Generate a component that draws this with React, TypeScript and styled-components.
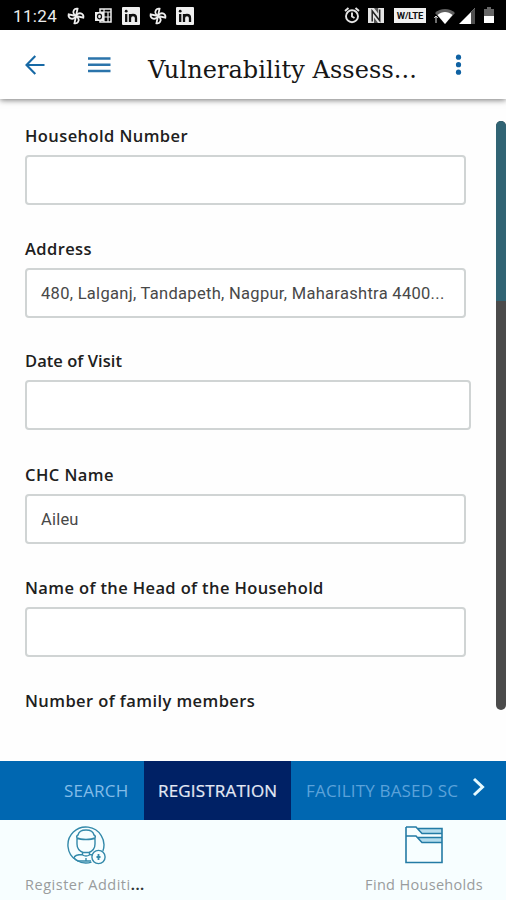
import React from "react";
import styled, { createGlobalStyle } from "styled-components";

const GlobalStyle = createGlobalStyle`
  * { box-sizing: border-box; }
  body { margin: 0; background: #fff; }
`;

const Screen = styled.div`
  width: 506px;
  height: 900px;
  display: flex;
  flex-direction: column;
  overflow: hidden;
  background: #fefefe;
  font-family: "Open Sans", "Noto Sans", sans-serif;
`;

const StatusBar = styled.div`
  flex: 0 0 30px;
  display: flex;
  align-items: center;
  padding: 1px 12px 0 13px;
  background: #000;
  color: #ececec;
`;

const Clock = styled.span`
  width: 54px;
  font: 400 17px/24px Roboto, sans-serif;
  letter-spacing: 0.35px;
  white-space: nowrap;
`;

const StatusIcon = styled.svg<{ $gap?: number }>`
  flex: none;
  display: block;
  margin-right: ${(p) => p.$gap ?? 0}px;
`;

const Grow = styled.div`
  flex: 1;
`;

const LteBadge = styled.span`
  width: 32px;
  height: 15px;
  margin-right: 8px;
  background: #f0f0f0;
  color: #111;
  font: 700 9.5px/15px Roboto, sans-serif;
  letter-spacing: -0.1px;
  text-align: center;
`;

const Header = styled.header`
  position: relative;
  flex: 0 0 69px;
  display: flex;
  align-items: center;
  padding: 0 40px 0 24px;
  background: #fff;
  box-shadow: 0 1px 6px rgba(0, 0, 0, 0.55);
`;

const Title = styled.h1`
  flex: 1;
  margin: 10px 0 0 36px;
  font: 400 24px/32px "DejaVu Serif", serif;
  letter-spacing: 0.07px;
  color: #161616;
  white-space: nowrap;
`;

const Body = styled.main`
  flex: 1 1 0;
  min-height: 0;
  display: flex;
  justify-content: space-between;
`;

const Form = styled.form`
  width: 471px;
  padding: 25px 0 0 25px;
  overflow: hidden;
`;

const Field = styled.div<{ $height: number }>`
  height: ${(p) => p.$height}px;
`;

const Label = styled.label<{ $spacing: number }>`
  display: block;
  height: 24px;
  margin-bottom: 7px;
  font-size: 16.5px;
  font-weight: 600;
  line-height: 24px;
  letter-spacing: ${(p) => p.$spacing}px;
  color: #202020;
  white-space: nowrap;
`;

const Value = styled.div<{ $wide?: boolean; $spacing?: number }>`
  width: ${(p) => (p.$wide ? 446 : 441)}px;
  height: 50px;
  padding: 0 14px;
  border: 2px solid #d0d4d4;
  border-radius: 4px;
  background: #fff;
  font: 400 16.5px/48px Roboto, sans-serif;
  letter-spacing: ${(p) => p.$spacing ?? 0}px;
  color: #484848;
  white-space: nowrap;
`;

const ScrollTrack = styled.div`
  width: 10px;
  height: 589px;
  margin-top: 22px;
  border-radius: 5px;
  background: #4b4b4b;
  overflow: hidden;
`;

const ScrollThumb = styled.div`
  height: 180px;
  background: #316474;
`;

const Tabs = styled.nav`
  flex: 0 0 59px;
  display: flex;
  background: #0067b1;
`;

const Tab = styled.div<{ $width: number; $indent: number; $active?: boolean; $color: string; $spacing: number }>`
  width: ${(p) => p.$width}px;
  padding-left: ${(p) => p.$indent}px;
  background: ${(p) => (p.$active ? "#002165" : "transparent")};
  color: ${(p) => p.$color};
  font-size: 17px;
  line-height: 59px;
  letter-spacing: ${(p) => p.$spacing}px;
  white-space: nowrap;
  -webkit-text-stroke: ${(p) => (p.$active ? 0.2 : 0)}px currentColor;
`;

const NextIcon = styled.svg`
  margin-top: 16px;
`;

const Footer = styled.footer`
  flex: 0 0 80px;
  display: flex;
  justify-content: space-between;
  padding: 5px 23px 0 25px;
  background: #f7feff;
`;

const Action = styled.div`
  display: flex;
  flex-direction: column;
  align-items: center;
`;

const ActionIcon = styled.svg<{ $shift?: number }>`
  display: block;
  margin-left: ${(p) => p.$shift ?? 0}px;
`;

const ActionLabel = styled.span<{ $spacing: number }>`
  margin-top: 9px;
  font-size: 14.5px;
  font-weight: 500;
  line-height: 22px;
  letter-spacing: ${(p) => p.$spacing}px;
  color: #999c9d;
  white-space: nowrap;
`;

const Dots = styled.b`
  color: #303638;
`;

const Pinwheel = ({ gap }: { gap: number }) => (
  <StatusIcon $gap={gap} width="18" height="18" viewBox="0 0 18 18" fill="none" stroke="#eee" strokeWidth="1.8">
    {[0, 90, 180, 270].map((a) => (
      <path key={a} d="M9 9V1.5C5.5 1.5 4.5 5.5 6.5 7.5Q7.5 8.5 9 9" transform={`rotate(${a + 12} 9 9)`} />
    ))}
  </StatusIcon>
);

const LinkedIn = ({ gap }: { gap: number }) => (
  <StatusIcon $gap={gap} width="18" height="18" viewBox="0 0 18 18">
    <rect width="18" height="18" rx="1" fill="#f0f0f0" />
    <circle cx="4.2" cy="4.2" r="1.4" fill="#111" />
    <path d="M4.2 7v8M8 15V7M8 11c0-4 6-4 6 0v4" fill="none" stroke="#111" strokeWidth="2.3" />
  </StatusIcon>
);

const fields = [
  { label: "Household Number", value: "", spacing: 0.42, height: 113 },
  {
    label: "Address",
    value: "480, Lalganj, Tandapeth, Nagpur, Maharashtra 4400...",
    spacing: 0.4,
    height: 112,
    valueSpacing: 0.3,
  },
  { label: "Date of Visit", value: "", spacing: 0.05, height: 114, wide: true },
  { label: "CHC Name", value: "Aileu", spacing: 0.45, height: 113, valueSpacing: 0.2 },
  { label: "Name of the Head of the Household", value: "", spacing: 0.38, height: 113 },
];

export default function App() {
  return (
    <Screen>
      <GlobalStyle />
      <StatusBar>
        <Clock>11:24</Clock>
        <Pinwheel gap={10} />
        <StatusIcon $gap={10} width="17" height="16" viewBox="0 0 17 16">
          <path d="M5 1h11v13H5z" fill="none" stroke="#eee" strokeWidth="1.5" />
          <path d="M5 4h11M9 1v13M13 4v10M9 9h7" stroke="#eee" strokeWidth="1.2" />
          <rect y="4" width="9" height="9" fill="#eee" />
          <ellipse cx="4.5" cy="8.5" rx="2" ry="2.4" fill="none" stroke="#111" strokeWidth="1.3" />
        </StatusIcon>
        <LinkedIn gap={9} />
        <Pinwheel gap={9} />
        <LinkedIn gap={0} />
        <Grow />
        <StatusIcon $gap={8} width="16" height="17" viewBox="0 0 16 17" fill="none" stroke="#e4e4e4" strokeWidth="1.9">
          <circle cx="8" cy="9.2" r="6" />
          <path d="M1 4l3.5-3M15 4l-3.5-3M8 5.5v4l2.5 1.5" />
        </StatusIcon>
        <StatusIcon $gap={10} width="16" height="17" viewBox="0 0 16 17">
          <path d="M0 1h16v15H0z" fill="#e4e4e4" />
          <path d="M4.2 14.5V4l7.5 9.5V2.5" fill="none" stroke="#222" strokeWidth="1.5" />
          <path d="M6 1l4.2 5.5V1M6 16v-5.5l4 5.5" fill="#555" />
        </StatusIcon>
        <LteBadge>W/LTE</LteBadge>
        <StatusIcon $gap={4} width="21" height="16" viewBox="0 0 21 16">
          <path d="M1 5C6-.5 16-.5 21 5L11 16z" fill="#606060" />
          <path d="M3.5 7C8 3 14 3 18.5 7L11 16z" fill="#fff" />
          <path d="M2 15V8M.3 10L2 8l1.7 2" stroke="#ddd" fill="none" />
        </StatusIcon>
        <StatusIcon $gap={9} width="16" height="16" viewBox="0 0 16 16">
          <path d="M16 0v16H0z" fill="#fff" />
          <path d="M12 4l4-4v16h-4z" fill="#505050" />
        </StatusIcon>
        <StatusIcon width="10" height="17" viewBox="0 0 10 17">
          <path d="M3 0h4v2h3v7H0V2h3z" fill="#666" />
          <path d="M0 9h10v7H0z" fill="#fff" />
        </StatusIcon>
      </StatusBar>

      <Header>
        <StatusIcon $gap={42} width="22" height="22" viewBox="0 0 22 22" fill="none" stroke="#1769a5" strokeWidth="2.1">
          <path d="M20.5 11H3M11.3 2L2.5 11l8.8 9" />
        </StatusIcon>
        <StatusIcon width="24" height="18" viewBox="0 0 24 18" stroke="#2b74ab" strokeWidth="2.5">
          <path d="M0 2.5h22.5M0 8.7h22.5M0 14.9h22.5" />
        </StatusIcon>
        <Title>Vulnerability Assess...</Title>
        <StatusIcon width="14" height="24" viewBox="0 0 14 24" fill="#0f62a3">
          <circle cx="6.5" cy="4.2" r="2.6" />
          <circle cx="6.5" cy="11.7" r="2.6" />
          <circle cx="6.5" cy="19.2" r="2.6" />
        </StatusIcon>
      </Header>

      <Body>
        <Form>
          {fields.map((f) => (
            <Field key={f.label} $height={f.height}>
              <Label $spacing={f.spacing}>{f.label}</Label>
              <Value $wide={f.wide} $spacing={f.valueSpacing}>{f.value}</Value>
            </Field>
          ))}
          <Label $spacing={0.42}>Number of family members</Label>
        </Form>
        <ScrollTrack>
          <ScrollThumb />
        </ScrollTrack>
      </Body>

      <Tabs>
        <Tab $width={144} $indent={64} $color="#82bce8" $spacing={0.2}>SEARCH</Tab>
        <Tab $width={147} $indent={14} $active $color="#e4eaf5" $spacing={0.18}>REGISTRATION</Tab>
        <Tab $width={180} $indent={15} $color="#5ba2da" $spacing={0.18}>FACILITY BASED SC</Tab>
        <NextIcon width="16" height="20" viewBox="0 0 16 20" fill="none" stroke="#e5faff" strokeWidth="3">
          <path d="M3 2l8.5 8L3 18" />
        </NextIcon>
      </Tabs>

      <Footer>
        <Action>
          <ActionIcon $shift={3} width="40" height="40" viewBox="0 0 40 40" fill="none" stroke="#3389aa" strokeWidth="1.4">
            <path d="M25.5 37.1A18 18 0 1 1 36.9 26" />
            <path d="M11 13v6q0 6 6 8.5h6q6-2.5 6-8.5v-6q1-2-1-3-1-5-8-5t-8 5q-2 1-1 3q3 1.5 9 1.5t9-1.5M16.5 27.5v2q-8 0-8.5 3.5 2 2 4 3h13M23.5 27.5v2l3 .5M16.5 30q3.5 2 7 0M20 33v3" />
            <circle cx="32.5" cy="32" r="6.6" />
            <path d="M32.5 29v6M30.5 32h4" strokeWidth="1.8" />
          </ActionIcon>
          <ActionLabel $spacing={0.52}>Register Additi<Dots>...</Dots></ActionLabel>
        </Action>
        <Action>
          <ActionIcon width="40" height="40" viewBox="0 0 40 40" fill="none" stroke="#237ba5" strokeWidth="1.6">
            <path d="M14 3.5h24v5H19zM14 12.5h24v5H19z" fill="#b4dced" stroke="none" />
            <path d="M2 2h10l6 6.5h20M2 11h10l6 6.5h20M14 3.5h24v34H2V2M14 12.5h24" />
          </ActionIcon>
          <ActionLabel $spacing={0.32}>Find Households</ActionLabel>
        </Action>
      </Footer>
    </Screen>
  );
}
